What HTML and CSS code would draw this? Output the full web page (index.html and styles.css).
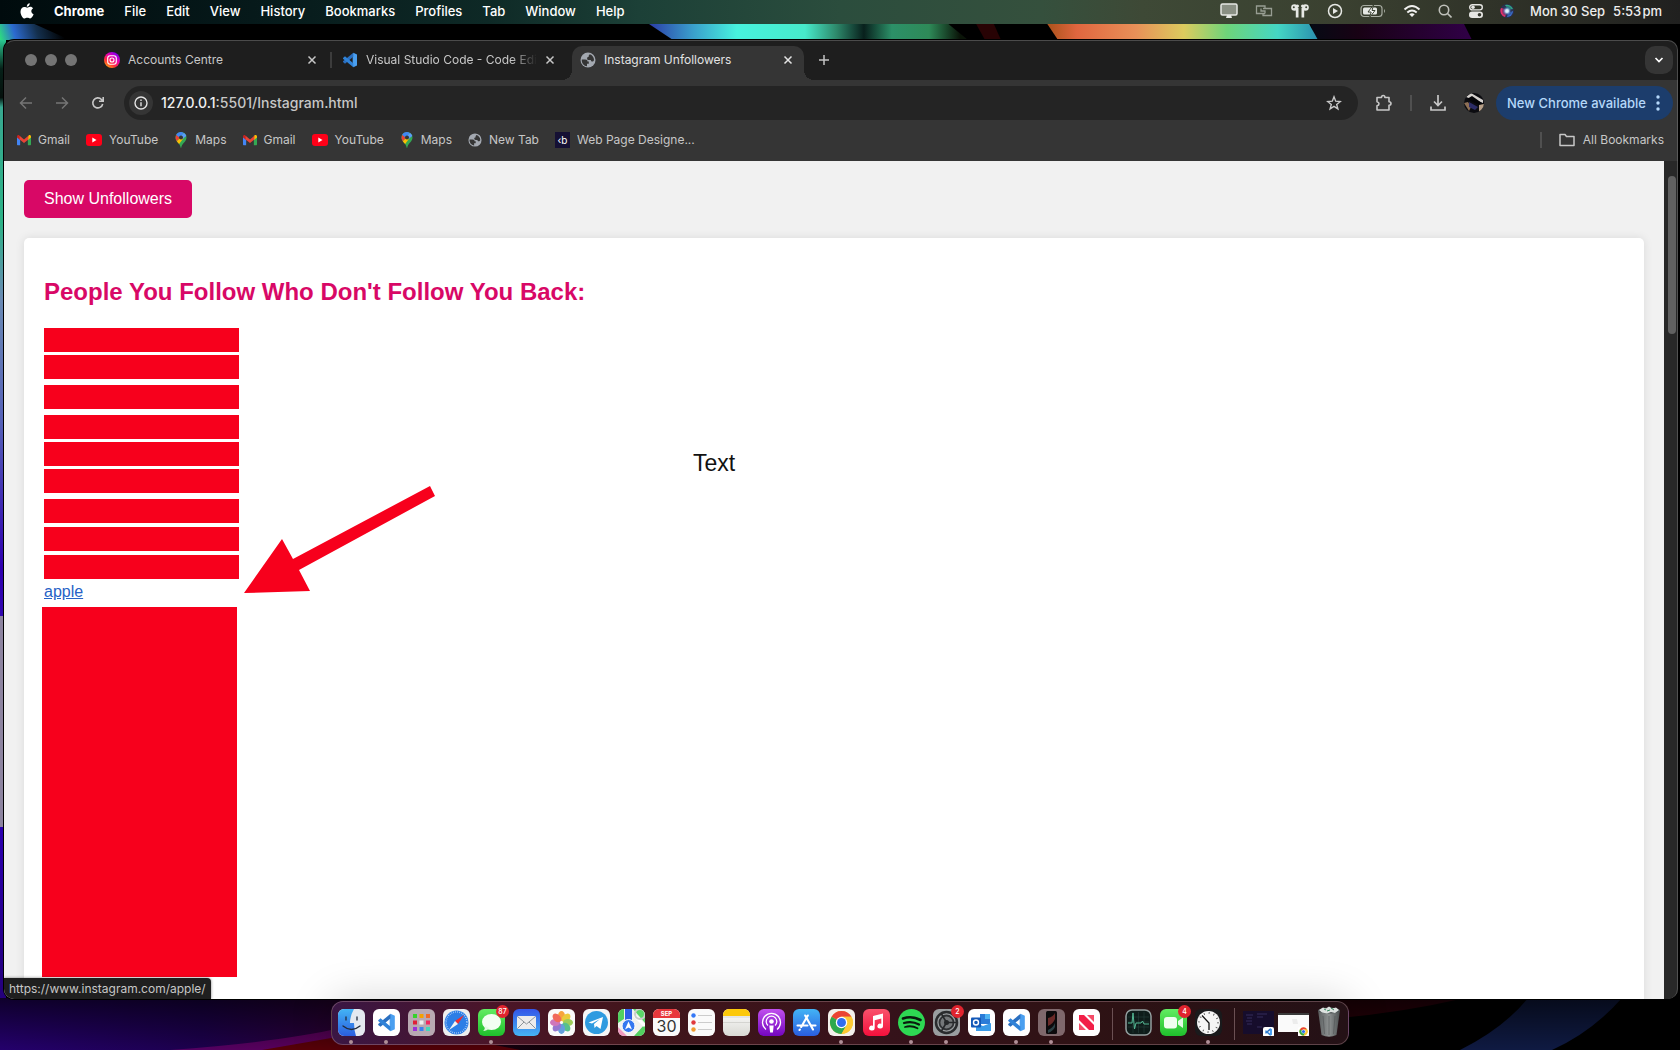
FILE: index.html
```html
<!DOCTYPE html>
<html lang="en">
<head>
<meta charset="utf-8">
<title>Instagram Unfollowers</title>
<link rel="stylesheet" href="styles.css">
</head>
<body>
<svg width="0" height="0" class="defs" aria-hidden="true">
  <defs>
    <linearGradient id="g-ig" x1="0" y1="1" x2=".7" y2="0"><stop offset="0" stop-color="#ffd600"/><stop offset=".4" stop-color="#ff2a3c"/><stop offset=".7" stop-color="#e600b0"/><stop offset="1" stop-color="#7a00f0"/></linearGradient>
    <linearGradient id="g-blue" x1="0" y1="0" x2="0" y2="1"><stop offset="0" stop-color="#43b4f5"/><stop offset="1" stop-color="#2a5de0"/></linearGradient>
    <linearGradient id="g-mail" x1="0" y1="0" x2="0" y2="1"><stop offset="0" stop-color="#3355e8"/><stop offset="1" stop-color="#46b4f4"/></linearGradient>
    <linearGradient id="g-green" x1="0" y1="0" x2="0" y2="1"><stop offset="0" stop-color="#62ec62"/><stop offset="1" stop-color="#1fc02c"/></linearGradient>
    <linearGradient id="g-pod" x1="0" y1="0" x2="0" y2="1"><stop offset="0" stop-color="#c050ee"/><stop offset="1" stop-color="#7406bf"/></linearGradient>
    <linearGradient id="g-music" x1="0" y1="0" x2="0" y2="1"><stop offset="0" stop-color="#f9526c"/><stop offset="1" stop-color="#f4103c"/></linearGradient>
    <linearGradient id="g-paper" x1="0" y1="0" x2="0" y2="1"><stop offset="0" stop-color="#fff"/><stop offset="1" stop-color="#d9d9d4"/></linearGradient>
    <linearGradient id="g-trash" x1="0" y1="0" x2="1" y2="0"><stop offset="0" stop-color="#5b5f60"/><stop offset=".5" stop-color="#8e9292"/><stop offset="1" stop-color="#4c5051"/></linearGradient>
    <radialGradient id="g-siri"><stop offset="0" stop-color="#fff"/><stop offset=".35" stop-color="#b8d8f0"/><stop offset=".7" stop-color="#3a5a9c" stop-opacity=".6"/><stop offset="1" stop-color="#20283c" stop-opacity=".3"/></radialGradient>
    <symbol id="close" viewBox="0 0 10 10"><path d="M1.500 1.500l7 7M8.500 1.500l-7 7" stroke="currentColor" stroke-width="1.500" fill="none"/></symbol>
    <symbol id="globe" viewBox="0 0 16 16"><circle cx="8" cy="8" r="7.500" fill="#a3a8b0"/><path d="M1.800 7.500h3.400c1.800 0 2.300.9 2.300 2h1.300v2.300H7v2.400C4 14 1.500 11.500 1.800 7.500zM9.800 2.200c2.500.8 4.200 3 4.200 5.800-.3 1-.9 1.500-1.800 1.500-.8 0-1.400-.6-1.400-1.500H8.700c-1 0-1.600-.7-1.600-1.600S7.700 5 8.600 5c0-1.200.1-1.900 1.200-2.800z" fill="#353535"/></symbol>
    <symbol id="gmail" viewBox="0 0 16 12"><path d="M0 2v9.200c0 .5.300.8.800.8h2.800V5z" fill="#4285f4"/><path d="M16 2v9.200c0 .5-.3.800-.8.800h-2.800V5z" fill="#34a853"/><path d="M0 2.200V3l3.600 3V2.200L2.500.6C1.500-.2 0 .5 0 2.200z" fill="#c5221f"/><path d="M16 2.200V3l-3.600 3V2.200l1.100-1.600c1-.8 2.500-.1 2.500 1.600z" fill="#fbbc04"/><path d="M3 1l5 4.300L13 1v4.500L8 9.500 3 5.500z" fill="#ea4335"/></symbol>
    <symbol id="youtube" viewBox="0 0 16 12"><rect width="16" height="12" rx="3" fill="#ff0018"/><path d="M6.300 3.500v5l4.200-2.500z" fill="#fff"/></symbol>
    <symbol id="maps" viewBox="0 0 12 16"><path d="M6 0a5.500 5.500 0 0 1 5.500 5.500C11.500 10 7 11 6.300 15.500c-.1.600-.6.600-.7 0C5 11 .5 10 .5 5.500A5.500 5.500 0 0 1 6 0z" fill="#34a853"/><path d="M6 0C3.700 0 2 1.300 1.100 3l3 2.500L8.900.9C8 .3 7 0 6 0z" fill="#4285f4"/><path d="M1.100 3C.1 5.300.5 7.500 1.800 9.300l3-3.600z" fill="#ea4335"/><path d="M1.800 9.300c.8 1.200 1.600 1.800 2.300 2.800L9 5.500 5 6z" fill="#fbbc04"/><path d="M8.900.9c1.200.7 2 1.800 2.400 3L7.500 7 6 3.800z" fill="#5a9cf8"/><circle cx="6" cy="5.500" r="2" fill="#353535"/></symbol>
    <symbol id="vscode" viewBox="0 0 24 24"><path d="M17 1l5.500 2.600v16.800L17 23l-1-3V4z" fill="#4a9ff0"/><path d="M17 1v6L4.500 17.500 1.500 15v-1z" fill="#2a6fc0"/><path d="M17 23v-6L4.500 6.500 1.500 9v1z" fill="#2f82d8"/></symbol>
    <symbol id="chrome" viewBox="0 0 24 24"><circle cx="12" cy="12" r="11" fill="#fcc934"/><path d="M12 12L2.470 6.500A11 11 0 0 1 21.530 6.500H12z" fill="#ea4335"/><path d="M12 12L2.470 6.500A11 11 0 0 0 12 23l5-8.500z" fill="#2da94f"/><path d="M12 6.500h9.530A11 11 0 0 1 12 23l5-8.500z" fill="#fcc934"/><circle cx="12" cy="12" r="5.500" fill="#fff"/><circle cx="12" cy="12" r="4.300" fill="#2f6df0"/></symbol>
  </defs>
</svg>

<svg class="wall wall-top" viewBox="0 0 1680 40" preserveAspectRatio="none" aria-hidden="true">
  <defs>
    <linearGradient id="w1" gradientUnits="userSpaceOnUse" x1="650" y1="0" x2="960" y2="0"><stop offset="0" stop-color="#2b3fa8"/><stop offset=".14" stop-color="#3aa0cc"/><stop offset=".28" stop-color="#47f2de"/><stop offset=".5" stop-color="#47eacb"/><stop offset=".6" stop-color="#2e8a6c"/><stop offset=".69" stop-color="#08201c"/><stop offset=".78" stop-color="#2c9068"/><stop offset=".9" stop-color="#2e8a58"/><stop offset="1" stop-color="#0a1408"/></linearGradient>
    <linearGradient id="w2" gradientUnits="userSpaceOnUse" x1="1050" y1="0" x2="1318" y2="0"><stop offset="0" stop-color="#b0541e"/><stop offset=".1" stop-color="#e0663f"/><stop offset=".32" stop-color="#e89058"/><stop offset=".5" stop-color="#dccb5e"/><stop offset=".66" stop-color="#6ed47a"/><stop offset=".85" stop-color="#44d6c4"/><stop offset="1" stop-color="#2a8fae"/></linearGradient>
    <linearGradient id="w3" gradientUnits="userSpaceOnUse" x1="1310" y1="0" x2="1470" y2="0"><stop offset="0" stop-color="#060a14"/><stop offset=".3" stop-color="#180214"/><stop offset="1" stop-color="#300046"/></linearGradient>
    <linearGradient id="w0" gradientUnits="userSpaceOnUse" x1="0" y1="40" x2="60" y2="22"><stop offset="0" stop-color="#2ee07c"/><stop offset=".25" stop-color="#2c6ad0"/><stop offset=".6" stop-color="#14304e"/><stop offset="1" stop-color="#000"/></linearGradient>
  </defs>
  <rect width="1680" height="40" fill="#000"/>
  <path d="M0 22h30L70 40H0z" fill="url(#w0)"/>
  <path d="M646 22h300l22 18H673z" fill="url(#w1)"/>
  <path d="M975 22h18l8 18h-16z" fill="#280304"/>
  <path d="M1310 22h153l9 18h-156z" fill="url(#w3)"/>
  <path d="M1046 22h262l10 18h-260z" fill="url(#w2)"/>
</svg>
<div class="wall wall-left"></div>
<svg class="wall wall-bottom" viewBox="0 0 1680 52" preserveAspectRatio="none" aria-hidden="true">
  <defs>
    <linearGradient id="w4"><stop offset="0" stop-color="#24006c"/><stop offset=".12" stop-color="#1c004c"/><stop offset=".2" stop-color="#2a0034"/><stop offset=".32" stop-color="#12000a"/><stop offset=".4" stop-color="#000"/></linearGradient>
    <linearGradient id="w5" x1="0" y1="0" x2="0" y2="1"><stop offset="0" stop-color="#000" stop-opacity=".6"/><stop offset="1" stop-color="#000" stop-opacity="0"/></linearGradient>
  </defs>
  <rect width="1680" height="52" fill="url(#w4)"/>
  <path d="M170 52Q280 44 340 30l40-10v32z" fill="#780070" opacity=".6"/>
  <path d="M262 52Q320 42 400 28l120 24z" fill="#560008"/>
  <path d="M1340 0h125q-60 14-125 20z" fill="#2c000a"/>
  <path d="M1528 0h94q-30 34-70 52h-92q44-22 68-52z" fill="#0f1a42"/>
  <rect width="1680" height="52" fill="url(#w5)"/>
</svg>

<header class="menubar">
  <svg class="apple" viewBox="0 0 14 17" aria-label="Apple"><path d="M9.800.3c.1 1.900-1.500 3.500-3 3.400C6.600 2 8.200.4 9.800.3zM7.200 4.700c.7 0 1.600-.9 3-.9 1.300 0 2.300.7 2.900 1.500-2.600 1.600-2.200 5 .5 6-.7 1.900-2 4.200-3.500 4.200-1.100 0-1.500-.7-2.800-.7s-1.700.7-2.700.7C2.700 15.500.5 11.800.5 8.700c0-3 1.900-4.700 3.800-4.700 1.300 0 2.200.7 2.900.7z" fill="#fff"/></svg>
  <nav class="menus">
    <strong>Chrome</strong><span>File</span><span>Edit</span><span>View</span><span>History</span><span>Bookmarks</span><span>Profiles</span><span>Tab</span><span>Window</span><span>Help</span>
  </nav>
  <div class="status">
    <svg width="18" height="16" viewBox="0 0 18 16"><rect x="1" y="1" width="16" height="11" rx="1.500" fill="#8a9084" stroke="#e6e8e4" stroke-width="1.500"/><path d="M6 15h6l-1-3H7z" fill="#e6e8e4"/></svg>
    <svg width="18" height="16" viewBox="0 0 18 16" fill="none" stroke="#979d92" stroke-width="1.300"><path d="M10 10.500H1.500V3H10v2.500M8 5.500h8.500v7H8v-2M6 5.500V8h4v2.500"/></svg>
    <svg width="20" height="16" viewBox="0 0 20 16" fill="#e6e8e4"><circle cx="4.500" cy="4.500" r="3.300"/><circle cx="15.500" cy="4.500" r="3.300"/><circle cx="7.500" cy="3" r="1.500"/><circle cx="12.500" cy="3" r="1.500"/><path d="M5.800 5h2.700v9.500H5.800zM11.500 5h2.700v9.500h-2.700z"/><circle cx="3.800" cy="4.300" r="1" fill="#3b4232"/><circle cx="16.200" cy="4.300" r="1" fill="#3b4232"/></svg>
    <svg width="16" height="16" viewBox="0 0 16 16"><circle cx="8" cy="8" r="6.500" fill="none" stroke="#e6e8e4" stroke-width="1.500"/><path d="M6 5v6l5-3z" fill="#e6e8e4"/></svg>
    <svg width="26" height="14" viewBox="0 0 26 14"><rect x="1" y="1.500" width="21" height="11" rx="3" fill="none" stroke="#a8aca2" stroke-width="1.200"/><rect x="3" y="3.500" width="14" height="7" rx="1.500" fill="#e6e8e4"/><path d="M24 5v4q2-2 0-4z" fill="#a8aca2"/><path d="M13.500 1L8 8h3.200L9.500 13.500 15 6.500h-3z" fill="#fff" stroke="#3b4232" stroke-width="1"/></svg>
    <svg width="18" height="14" viewBox="0 0 18 14" fill="none" stroke="#f0f0ee" stroke-width="2"><path d="M1.500 5.500Q9-1.500 16.500 5.500M4.300 8.500q4.700-4 9.400 0"/><path d="M6.300 10.200q2.700-2 5.400 0L9 13z" fill="#f0f0ee" stroke="none"/></svg>
    <svg width="14" height="14" viewBox="0 0 14 14" fill="none" stroke="#bfc0ba" stroke-width="1.600"><circle cx="6" cy="6" r="4.700"/><path d="M9.500 9.500l4 4"/></svg>
    <svg width="14" height="14" viewBox="0 0 14 14"><rect x=".7" y=".7" width="12.600" height="5.200" rx="2.600" fill="none" stroke="#e6e6e3" stroke-width="1.400"/><circle cx="4" cy="3.300" r="1.800" fill="#e6e6e3"/><rect y="7.500" width="14" height="6.500" rx="3.200" fill="#e6e6e3"/><circle cx="10.500" cy="10.700" r="1.800" fill="#33352c"/></svg>
    <svg width="14" height="14" viewBox="0 0 14 14"><circle cx="7" cy="7" r="7" fill="#2b3150"/><path d="M1 4a6.500 6.500 0 0 0 4 9q2-4 0-8z" fill="#e0306c"/><path d="M5 1a6.500 6.500 0 0 1 8 4L8 6z" fill="#2fa888"/><path d="M13 7a6 6 0 0 1-6 6l1-4z" fill="#3a70d0"/><circle cx="7" cy="7" r="5" fill="url(#g-siri)"/></svg>
    <time class="clock"><span>Mon 30 Sep</span><span>5:53&#8202;pm</span></time>
  </div>
</header>

<main class="window">
  <div class="tabstrip">
    <div class="lights"><i></i><i></i><i></i></div>
    <div class="tab">
      <svg width="16" height="16" viewBox="0 0 16 16"><circle cx="8" cy="8" r="8" fill="url(#g-ig)"/><rect x="3.700" y="3.700" width="8.600" height="8.600" rx="2.500" fill="none" stroke="#fff" stroke-width="1.100"/><circle cx="8" cy="8" r="2" fill="none" stroke="#fff" stroke-width="1.100"/></svg>
      <span class="tab-title">Accounts Centre</span>
      <button class="tab-close" aria-label="Close tab"><svg width="10" height="10"><use href="#close"/></svg></button>
    </div>
    <div class="tab divided">
      <svg width="16" height="16"><use href="#vscode"/></svg>
      <span class="tab-title fade">Visual Studio Code - Code Editing</span>
      <button class="tab-close" aria-label="Close tab"><svg width="10" height="10"><use href="#close"/></svg></button>
    </div>
    <div class="tab active">
      <svg width="16" height="16"><use href="#globe"/></svg>
      <span class="tab-title">Instagram Unfollowers</span>
      <button class="tab-close" aria-label="Close tab"><svg width="10" height="10"><use href="#close"/></svg></button>
    </div>
    <button class="new-tab" aria-label="New tab"><svg width="12" height="12" viewBox="0 0 12 12"><path d="M6 1v10M1 6h10" stroke="#c4c4c4" stroke-width="1.500"/></svg></button>
    <button class="tab-search" aria-label="Search tabs"><svg width="10" height="8" viewBox="0 0 10 8"><path d="M1.500 2L5 5.500 8.500 2" fill="none" stroke="#fff" stroke-width="1.700"/></svg></button>
  </div>

  <div class="toolbar">
    <button class="nav" aria-label="Back"><svg width="16" height="16" viewBox="0 0 16 16" fill="none" stroke="#757575" stroke-width="1.500"><path d="M14 8H3M8 2.500L2.500 8 8 13.500"/></svg></button>
    <button class="nav" aria-label="Forward"><svg width="16" height="16" viewBox="0 0 16 16" fill="none" stroke="#757575" stroke-width="1.500"><path d="M2 8h11M8 2.500L13.500 8 8 13.500"/></svg></button>
    <button class="nav" aria-label="Reload"><svg width="16" height="16" viewBox="0 0 16 16" fill="none" stroke="#c7c7c7" stroke-width="1.600"><path d="M12.700 9A5 5 0 1 1 11.500 4.500L13 6M13.200 2v4.300H9"/></svg></button>
    <div class="omnibox">
      <button class="info" aria-label="View site information"><svg width="14" height="14" viewBox="0 0 14 14" fill="none" stroke="#e3e3e3" stroke-width="1.400"><circle cx="7" cy="7" r="6"/><path d="M7 6.200v4M7 3.500v1.400"/></svg></button>
      <a class="url" href="#"><b>127.0.0.1</b>:5501/Instagram.html</a>
      <button class="star" aria-label="Bookmark this tab"><svg width="16" height="16" viewBox="0 0 16 16" fill="none" stroke="#c7c7c7" stroke-width="1.400"><path d="M8 1.800l1.700 4.400 4.600.3-3.600 2.900 1.200 4.500L8 11.400l-3.900 2.500 1.200-4.500L1.700 6.500l4.600-.3z"/></svg></button>
    </div>
    <button class="tool" aria-label="Extensions"><svg width="18" height="18" viewBox="0 0 18 18" fill="none" stroke="#c7c7c7" stroke-width="1.600" stroke-linejoin="round"><path d="M2 3.500h4.500q0-2 1.700-2t1.700 2H14v4.300q2 0 2 1.700t-2 1.700V16H2v-4.200q2-.3 2-2t-2-2z"/></svg></button>
    <i class="rule"></i>
    <button class="tool" aria-label="Downloads"><svg width="18" height="18" viewBox="0 0 18 18" fill="none" stroke="#c7c7c7" stroke-width="1.700"><path d="M9 1v10M5 7.500l4 4 4-4M2 12.500V16h14v-3.500"/></svg></button>
    <svg class="avatar" width="20" height="20" viewBox="0 0 20 20"><clipPath id="av"><circle cx="10" cy="10" r="10"/></clipPath><g clip-path="url(#av)"><rect width="20" height="20" fill="#0c0c10"/><path d="M2 4L7 0l12 7v3z" fill="#d4d0cc"/><path d="M3 6L8 3l10 7-1 3z" fill="#050508"/><path d="M0 10l4-1 3 5-2 4z" fill="#8d6f55"/><path d="M5 9l9 5-3 3-6-3z" fill="#2c2c66"/><path d="M15 12l5-1v5l-5 3z" fill="#b8a088"/></g></svg>
    <button class="update">New Chrome available<svg width="4" height="16" viewBox="0 0 4 16" fill="#b5d8fa"><circle cx="2" cy="2" r="1.700"/><circle cx="2" cy="8" r="1.700"/><circle cx="2" cy="14" r="1.700"/></svg></button>
  </div>

  <nav class="bookmarks">
    <a href="#"><svg width="14" height="12"><use href="#gmail"/></svg>Gmail</a>
    <a href="#"><svg width="16" height="12"><use href="#youtube"/></svg>YouTube</a>
    <a href="#"><svg width="14" height="16"><use href="#maps"/></svg>Maps</a>
    <a href="#"><svg width="14" height="12"><use href="#gmail"/></svg>Gmail</a>
    <a href="#"><svg width="16" height="12"><use href="#youtube"/></svg>YouTube</a>
    <a href="#"><svg width="14" height="16"><use href="#maps"/></svg>Maps</a>
    <a href="#"><svg width="14" height="14"><use href="#globe"/></svg>New Tab</a>
    <a href="#"><span class="cb">‹b</span>Web Page Designe...</a>
    <a class="all" href="#"><svg width="16" height="14" viewBox="0 0 16 14" fill="none" stroke="#c7c7c7" stroke-width="1.500"><path d="M1 1.500h5l1.500 2H15v9H1z" stroke-linejoin="round"/></svg>All Bookmarks</a>
  </nav>

  <div class="viewport">
    <section class="page">
      <button class="show">Show Unfollowers</button>
      <article class="card">
        <h2>People You Follow Who Don't Follow You Back:</h2>
        <ul class="people">
          <li class="bar tight"></li>
          <li class="bar loose"></li>
          <li class="bar loose"></li>
          <li class="bar tight"></li>
          <li class="bar tight"></li>
          <li class="bar loose"></li>
          <li class="bar"></li>
          <li class="bar"></li>
          <li class="bar"></li>
          <li><a href="https://www.instagram.com/apple/">apple</a></li>
          <li class="bar block"></li>
        </ul>
        <svg class="arrow" width="192" height="108" viewBox="0 0 192 108" aria-hidden="true"><path d="M-1 107L37 53l11 20L185 0l5 10L54 84l11 21z" fill="#f7001c"/></svg>
        <span class="note">Text</span>
      </article>
    </section>
    <div class="scrollbar"><i></i></div>
    <div class="link-status">https://www.instagram.com/apple/</div>
  </div>
</main>

<footer class="dock-row">
<div class="dock">
  <span class="app run"><svg viewBox="0 0 27 27"><rect width="27" height="27" rx="6" fill="#e4e9f0"/><path d="M6 0h10q-4 7-4 14h4q0 7 2 13H6a6 6 0 0 1-6-6V6a6 6 0 0 1 6-6z" fill="url(#g-blue)"/><path d="M8 8v3M19 8v3M5 17q8.500 7 17 0" fill="none" stroke="#222c3c" stroke-width="1.300" stroke-linecap="round"/></svg></span>
  <span class="app run"><svg viewBox="0 0 27 27"><rect width="27" height="27" rx="6" fill="#fff"/><use href="#vscode" x="4" y="4" width="19" height="19"/></svg></span>
  <span class="app"><svg viewBox="0 0 27 27"><rect width="27" height="27" rx="6" fill="#b8a9b2"/><g><path d="M5 5h4v4H5z" fill="#35d22c"/><path d="M11.500 5h4v4h-4z" fill="#f5a000"/><path d="M18 5h4v4h-4z" fill="#f06a28"/><path d="M5 11.500h4v4H5z" fill="#e02038"/><path d="M11.500 11.500h4v4h-4z" fill="#eee"/><path d="M18 11.500h4v4h-4z" fill="#f02860"/><path d="M5 18h4v4H5z" fill="#9a30d8"/><path d="M11.500 18h4v4h-4z" fill="#3a80f0"/><path d="M18 18h4v4h-4z" fill="#45d8b8"/></g></svg></span>
  <span class="app"><svg viewBox="0 0 27 27"><rect width="27" height="27" rx="6" fill="#eee"/><circle cx="13.500" cy="13.500" r="12" fill="#2d7ee6"/><circle cx="13.500" cy="13.500" r="10.500" fill="none" stroke="#d4e8ff" stroke-width="1.500" stroke-dasharray=".6 1.400"/><path d="M21 6l-6 9-3-3z" fill="#f02c30"/><path d="M6 21l6-9 3 3z" fill="#f4f4f4"/></svg></span>
  <span class="app run"><svg viewBox="0 0 27 27"><rect width="27" height="27" rx="6" fill="url(#g-green)"/><ellipse cx="13.500" cy="13" rx="9.500" ry="8" fill="#f2fff2"/><path d="M7 17q0 4-2 5 4 0 6-3z" fill="#e4f8e4"/></svg><b class="badge">87</b></span>
  <span class="app"><svg viewBox="0 0 27 27"><rect width="27" height="27" rx="6" fill="url(#g-mail)"/><rect x="4" y="7" width="19" height="13" rx="1.500" fill="#ececec"/><path d="M4.500 7.500l9 7.500 9-7.500M4.500 19.500l6.500-6.500M22.500 19.500L16 13" fill="none" stroke="#8d9499" stroke-width="1"/></svg></span>
  <span class="app"><svg viewBox="0 0 27 27"><rect width="27" height="27" rx="6" fill="#fafafa"/><g opacity=".85"><ellipse cx="13.500" cy="7" rx="3.500" ry="5" fill="#f7941d"/><ellipse cx="13.500" cy="7" rx="3.500" ry="5" fill="#e8c21a" transform="rotate(45 13.500 13.500)"/><ellipse cx="13.500" cy="7" rx="3.500" ry="5" fill="#8dc63f" transform="rotate(90 13.500 13.500)"/><ellipse cx="13.500" cy="7" rx="3.500" ry="5" fill="#3bb878" transform="rotate(135 13.500 13.500)"/><ellipse cx="13.500" cy="7" rx="3.500" ry="5" fill="#4a90d8" transform="rotate(180 13.500 13.500)"/><ellipse cx="13.500" cy="7" rx="3.500" ry="5" fill="#8560c8" transform="rotate(225 13.500 13.500)"/><ellipse cx="13.500" cy="7" rx="3.500" ry="5" fill="#c860b0" transform="rotate(270 13.500 13.500)"/><ellipse cx="13.500" cy="7" rx="3.500" ry="5" fill="#f05040" transform="rotate(315 13.500 13.500)"/></g></svg></span>
  <span class="app"><svg viewBox="0 0 27 27"><rect width="27" height="27" rx="6" fill="#f6f6f6"/><circle cx="13.500" cy="13.500" r="11.500" fill="#2f9be0"/><path d="M5.500 13.500L20 8l-2.500 12-4-3-2 2-.5-4 6-5-8 4.500z" fill="#fff"/></svg></span>
  <span class="app"><svg viewBox="0 0 27 27"><clipPath id="mp"><rect width="27" height="27" rx="6"/></clipPath><g clip-path="url(#mp)"><rect width="27" height="27" fill="#f2f2ee"/><path d="M0 0h6v10L0 14zM16 27l11-12v12z" fill="#52d060"/><path d="M15 0h12v14z" fill="#5bd668"/><path d="M7 0h7v12H7z" fill="#2c5fe8"/><path d="M16 6l11 11" stroke="#fff" stroke-width="3"/><path d="M0 18l9 9H0z" fill="#f09ac0"/><circle cx="22" cy="5" r="5" fill="none" stroke="#ccc" stroke-width="2"/></g><circle cx="10.500" cy="17" r="6.500" fill="#3478f0" stroke="#fff" stroke-width="1"/><path d="M10.500 12.500l3.500 8-3.500-2-3.500 2z" fill="#fff"/></svg></span>
  <span class="app cal"><em>SEP</em><b>30</b></span>
  <span class="app"><svg viewBox="0 0 27 27"><rect width="27" height="27" rx="6" fill="#fafafa"/><path d="M10 6.500h14M10 13.500h14M10 20.500h14" stroke="#ccc" stroke-width="1"/><circle cx="5.500" cy="6.500" r="2.200" fill="#3478f6"/><circle cx="5.500" cy="13.500" r="2.200" fill="#e0383c"/><circle cx="5.500" cy="20.500" r="2.200" fill="#f09a30"/></svg></span>
  <span class="app"><svg viewBox="0 0 27 27"><rect width="27" height="27" rx="6" fill="url(#g-paper)"/><path d="M0 7V6a6 6 0 0 1 6-6h15a6 6 0 0 1 6 6v1z" fill="#fcc80a"/><path d="M0 8h27M0 13.500h27" stroke="#c4c4c0" stroke-width=".6"/></svg></span>
  <span class="app"><svg viewBox="0 0 27 27"><rect width="27" height="27" rx="6" fill="url(#g-pod)"/><g fill="none" stroke="#fff" stroke-width="1.300"><path d="M8 20.500a9 9 0 1 1 11 0M10 16.500a5.300 5.300 0 1 1 7 0"/></g><circle cx="13.500" cy="12.500" r="2.300" fill="#fff"/><path d="M11.300 16.500h4.400l-.8 7h-2.800z" fill="#fff"/></svg></span>
  <span class="app"><svg viewBox="0 0 27 27"><rect width="27" height="27" rx="6" fill="url(#g-blue)"/><g fill="none" stroke="#fff" stroke-width="2.100" stroke-linecap="round"><path d="M14.800 6.500L8.200 18M12.200 6.500L20 20.500M4.500 16.500h10M18.500 16.500h4M6.800 20.500l-.3.500"/></g></svg></span>
  <span class="app run"><svg viewBox="0 0 27 27"><rect width="27" height="27" rx="6" fill="#f3f0ec"/><use href="#chrome" x="1" y="1" width="25" height="25"/></svg></span>
  <span class="app"><svg viewBox="0 0 27 27"><rect width="27" height="27" rx="6" fill="url(#g-music)"/><path d="M10 7l10-2.500V17a2.800 2.500 0 1 1-1.700-2.200V9.500l-6.600 1.700V19A2.800 2.500 0 1 1 10 16.800z" fill="#fff"/></svg></span>
  <span class="app run"><svg viewBox="0 0 27 27"><circle cx="13.500" cy="13.500" r="13.500" fill="#2ed853"/><g fill="none" stroke="#0a1a0e" stroke-linecap="round"><path d="M5 9.500q9-3 17.500 1.500" stroke-width="2.600"/><path d="M6 14q8-2.500 15 1.500" stroke-width="2.200"/><path d="M7 18q6.500-2 12.500 1.300" stroke-width="1.800"/></g></svg></span>
  <span class="app run"><svg viewBox="0 0 27 27"><rect width="27" height="27" rx="6" fill="#9a9ea0"/><circle cx="13.500" cy="13.500" r="10.500" fill="none" stroke="#2a2c2e" stroke-width="2.500"/><circle cx="13.500" cy="13.500" r="7" fill="#75787a" stroke="#303234" stroke-width="1.800"/><path d="M13.500 13.500H23M13.500 13.500L8.500 5M13.500 13.500L8.500 22" stroke="#26282a" stroke-width="1.600"/><circle cx="13.500" cy="13.500" r="2.500" fill="#26282a"/></svg><b class="badge">2</b></span>
  <span class="app"><svg viewBox="0 0 27 27"><rect width="27" height="27" rx="6" fill="#fff"/><path d="M12 5h10v10H12z" fill="#2b7cd8"/><path d="M17 5h5v5h-5z" fill="#4fb4f2"/><path d="M8 14l7 3 8-3v8H8z" fill="#3a9be8"/><rect x="3" y="8.500" width="10" height="10" rx="1" fill="#1459b8"/><circle cx="8" cy="13.500" r="2.500" fill="none" stroke="#fff" stroke-width="1.400"/></svg></span>
  <span class="app run"><svg viewBox="0 0 27 27"><rect width="27" height="27" rx="6" fill="#fff"/><use href="#vscode" x="4" y="4" width="19" height="19"/></svg></span>
  <span class="app run"><svg viewBox="0 0 27 27"><rect width="27" height="27" rx="6" fill="#7f686c"/><rect x="8" y="2" width="11" height="23" rx="1.500" fill="#0c0a0c"/><path d="M10 9q5-1 7-5v6q-2 5-7 7z" fill="#6a2a28"/><path d="M10 21q5-2 7-7v4q-2 4-7 6z" fill="#2b4044"/></svg></span>
  <span class="app"><svg viewBox="0 0 27 27"><rect width="27" height="27" rx="6" fill="#fff"/><path d="M6 6h5l10 10v5h-5L6 11z" fill="#f21f48"/><path d="M14 6h7v7zM6 14v7h7z" fill="#f54c68"/></svg></span>
  <i class="dock-rule"></i>
  <span class="app"><svg viewBox="0 0 27 27"><rect x="1" y="1" width="25" height="25" rx="6" fill="#0e1c1a" stroke="#94a0a0" stroke-width="1.500"/><path d="M3 8h21M3 13h21M3 18h21M8 3v21M13.500 3v21M19 3v21" stroke="#294540" stroke-width=".5"/><path d="M3 14h4l1-10 1.500 16L11 14h5l1.500-2 1.500 3h5" fill="none" stroke="#54b894" stroke-width="1"/></svg></span>
  <span class="app"><svg viewBox="0 0 27 27"><rect width="27" height="27" rx="6" fill="url(#g-green)"/><rect x="4" y="8" width="13" height="11.500" rx="3" fill="#effff0"/><path d="M18 12l5-3.500v10.500l-5-3.500z" fill="#e6fbe7"/></svg><b class="badge">4</b></span>
  <span class="app run"><svg viewBox="0 0 27 27"><rect width="27" height="27" rx="6" fill="#1a1a1c"/><circle cx="13.500" cy="13.500" r="11.500" fill="#f5f5f5"/><circle cx="13.500" cy="13.500" r="9.500" fill="none" stroke="#444" stroke-width="2" stroke-dasharray=".8 4.170"/><path d="M14 21v-7L7 6.500" fill="none" stroke="#111" stroke-width="1.300"/></svg></span>
  <i class="dock-rule"></i>
  <span class="thumb"><svg viewBox="0 0 31 27"><rect y="2" width="31" height="23" fill="#160d2c"/><path d="M3 6h7M4 9h5M3 12h6M4 15h5M14 5h10M14 8h6M14 18h5" stroke="#3c3568" stroke-width=".8"/><rect x="20" y="18" width="11" height="10" rx="2" fill="#fff"/><use href="#vscode" x="21.500" y="19" width="8" height="8"/></svg></span>
  <span class="thumb"><svg viewBox="0 0 31 27"><rect y="4" width="31" height="19" fill="#fafafa"/><path d="M0 4h31v2H0z" fill="#3a3a3a"/><path d="M14 10h5l1 5h-5z" fill="#ececec"/><rect x="20" y="18" width="11" height="10" rx="2" fill="#fff"/><use href="#chrome" x="21" y="18" width="9" height="9"/></svg></span>
  <span class="trash"><svg viewBox="0 0 24 32"><path d="M1 4h22l-3.500 25q-7.500 3.500-15 0z" fill="url(#g-trash)"/><path d="M6 10l1.500 18M12 10v19M18 10l-1.500 18" stroke="#505456" stroke-width=".6"/><ellipse cx="12" cy="4.500" rx="11" ry="3" fill="#4c5052"/><path d="M2 4l4-2.500 3 1 3-2 3 2 4-1 3 2.500-4 3-4-1-4 1.500-5-1z" fill="#dde2e0"/><path d="M7 3l2 1M14 2l3 2M10 5l3-1" stroke="#368a60" stroke-width="1"/></svg></span>
</div>
</footer>
</body>
</html>
```
FILE: styles.css
```css
* { box-sizing: border-box; }

body {
  margin: 0;
  height: 100vh;
  position: relative;
  display: flex;
  flex-direction: column;
  overflow: hidden;
  background: #000;
  font: 400 12px/16px Inter, "Liberation Sans", sans-serif;
  color: #c7c7c7;
}

button {
  border: 0;
  padding: 0;
  background: none;
  color: inherit;
  font: inherit;
  display: flex;
  align-items: center;
  justify-content: center;
  flex: none;
}

a { color: inherit; text-decoration: none; }
svg { display: block; flex: none; }
.defs { position: absolute; }

/* Wallpaper showing around the window */
.wall { position: absolute; left: 0; }
.wall-top { top: 0; width: 100%; height: 40px; }
.wall-left {
  top: 40px;
  bottom: 50px;
  width: 6px;
  background: linear-gradient(#2ac890 0, #062018 3%, #04100c 6%, #38a890 7%, #2db287 19%, #6a8ab4 27%, #5560b8 40%, #2f00b0 55%, #3208b0 60%, #8d84a0 60%, #8d84a0 82%, #2c00b0 82%, #24007a 100%);
}
.wall-bottom { bottom: 0; width: 100%; height: 52px; }

/* System menu bar */
.menubar {
  position: relative;
  height: 24px;
  padding: 0 18px 2px 20px;
  display: flex;
  align-items: center;
  background: linear-gradient(90deg, #000b0d, #06191a 15%, #0e2926 29%, #1c4037 38%, #2b4d3d 50%, #35503d 62%, #3e4936 68%, #3a4030 80%, #2c2e26 92%, #20201f);
  color: #fff;
  font-size: 13px;
  font-weight: 500;
}
.apple { width: 14px; height: 17px; }
.menus { display: flex; gap: 20px; margin-left: 20px; }
.menus strong { font-weight: 700; }
.status { display: flex; align-items: center; gap: 17px; margin-left: auto; }
.clock { display: flex; gap: 8px; margin-left: -1px; color: #eee; }

/* Browser window */
.window {
  position: relative;
  flex: 1;
  min-height: 0;
  margin: 16px 2px 0 4px;
  display: flex;
  flex-direction: column;
  border-radius: 10px;
  overflow: hidden;
  background: #353535;
  box-shadow: 0 0 0 1px #000;
}
.window::after {
  content: "";
  position: absolute;
  inset: 0;
  border: 1px solid rgba(160, 160, 160, .35);
  border-bottom: 0;
  border-left-color: transparent;
  border-radius: 10px;
  pointer-events: none;
}

.tabstrip {
  height: 40px;
  padding: 6px 5px 0 21px;
  display: flex;
  background: #1e1e1e;
}
.lights { display: flex; gap: 8px; width: 71px; padding-top: 8px; }
.lights i { width: 12px; height: 12px; border-radius: 50%; background: #747474; }
.tab {
  position: relative;
  width: 232px;
  height: 34px;
  margin-right: 6px;
  padding: 0 11px 6px 8px;
  display: flex;
  align-items: center;
  gap: 8px;
}
.tab-title { flex: 1; white-space: nowrap; overflow: hidden; }
.tab-title.fade {
  mask-image: linear-gradient(90deg, #000 85%, transparent);
}
.tab.active { background: #353535; border-radius: 10px 10px 0 0; color: #e3e3e3; }
.tab.active::before,
.tab.active::after {
  content: "";
  position: absolute;
  bottom: 0;
  width: 10px;
  height: 10px;
}
.tab.active::before { left: -10px; background: radial-gradient(circle at 0 0, transparent 10px, #353535 10px); }
.tab.active::after { right: -10px; background: radial-gradient(circle at 100% 0, transparent 10px, #353535 10px); }
.tab.divided::before {
  content: "";
  position: absolute;
  left: -4px;
  top: 6px;
  width: 2px;
  height: 16px;
  background: #3c3c3c;
}
.new-tab { width: 28px; height: 28px; }
.tab-search { width: 28px; height: 28px; margin-left: auto; border-radius: 10px; background: #353535; }

.toolbar {
  height: 46px;
  padding: 0 5px 0 4px;
  display: flex;
  align-items: center;
}
.nav { width: 36px; height: 34px; }
.omnibox {
  flex: 1;
  height: 34px;
  margin-left: 8px;
  padding: 0 16px 0 5px;
  display: flex;
  align-items: center;
  border-radius: 17px;
  background: #242424;
}
.info { width: 24px; height: 24px; border-radius: 50%; background: #353535; }
.url { flex: 1; margin-left: 8px; font-size: 14px; font-weight: 500; color: #c7c7c7; }
.url b { font-weight: 500; color: #f0f0f0; }
.tool { width: 36px; height: 34px; }
.omnibox + .tool { margin-left: 8px; }
.rule { width: 2px; height: 16px; margin: 0 8px; background: #505050; }
.avatar { margin: 0 12px 0 8px; }
.update {
  height: 34px;
  padding: 0 13px 0 11px;
  gap: 10px;
  border-radius: 17px;
  background: #1c3d6c;
  color: #b5d8fa;
  font-size: 13px;
  font-weight: 500;
}

.bookmarks {
  height: 35px;
  padding: 0 14px 8px 13px;
  display: flex;
  align-items: center;
  gap: 16px;
}
.bookmarks a { display: flex; align-items: center; gap: 7px; }
.bookmarks .all { margin-left: auto; padding-left: 17px; gap: 8px; border-left: 2px solid #505050; }
.cb { width: 15px; background: #151034; color: #fff; font-size: 10px; text-align: center; }

/* Web page */
.viewport { position: relative; flex: 1; min-height: 0; display: flex; }
.page {
  flex: 1;
  min-width: 0;
  padding: 19px 20px 0;
  display: flex;
  flex-direction: column;
  overflow: hidden;
  background: #f1f1f1;
  font: 400 16px/18px "Liberation Sans", Arial, sans-serif;
}
.show {
  align-self: flex-start;
  padding: 10px 20px;
  border-radius: 5px;
  background: #d80866;
  color: #fff;
}
.card {
  position: relative;
  flex: 1 0 auto;
  margin-top: 20px;
  padding: 40px 20px;
  border-radius: 5px 5px 0 0;
  background: #fff;
  box-shadow: 0 0 10px rgba(0, 0, 0, .1);
}
.card h2 { margin: 0; font-size: 24px; line-height: 27px; color: #d80866; }
.people { margin: 23px 0 0; padding: 0; list-style: none; }
.people a { display: block; margin-bottom: 6px; color: #2762c6; text-decoration: underline; }
.bar { width: 195px; height: 24px; margin-bottom: 4px; background: #f7001c; }
.tight { margin-bottom: 3px; }
.loose { margin-bottom: 6px; }
.block { height: 370px; margin: 0 0 0 -2px; }
.arrow { position: absolute; left: 221px; top: 248px; overflow: visible; }
.note { position: absolute; left: 669px; top: 212px; font-size: 23px; line-height: 26px; color: #111; }

.scrollbar { width: 14px; padding: 15px 2px 0 4px; background: #282828; }
.scrollbar i { display: block; height: 158px; border-radius: 4px; background: #616161; }
.link-status {
  position: absolute;
  left: 0;
  bottom: 0;
  padding: 3px 5px 2px;
  border-radius: 0 4px 0 0;
  background: #1f1f1f;
  box-shadow: 0 0 3px rgba(0, 0, 0, .5);
}

/* Dock */
.dock-row { position: relative; display: flex; justify-content: center; padding: 2px 0 5px; }
.dock {
  height: 44px;
  padding: 7px 7px 0 6px;
  display: flex;
  gap: 8px;
  border: 1px solid rgba(200, 160, 170, .35);
  border-radius: 12px;
  background: linear-gradient(90deg, #3a1644, #4b1528 16%, #42151b 30%, #35121a 55%, #2e1214 75%, #241116);
  box-shadow: 0 0 44px rgba(0, 0, 0, .18);
}
.app { position: relative; width: 27px; height: 27px; }
.app.run::after {
  content: "";
  position: absolute;
  left: 11px;
  top: 31px;
  width: 4px;
  height: 4px;
  border-radius: 50%;
  background: #b09098;
}
.badge {
  position: absolute;
  right: -4px;
  top: -4px;
  width: 13px;
  height: 13px;
  border-radius: 50%;
  background: #e0242e;
  color: #fff;
  font-size: 7px;
  line-height: 13px;
  font-weight: 500;
  text-align: center;
}
.cal {
  border-radius: 6px;
  overflow: hidden;
  background: #fafafa;
  display: flex;
  flex-direction: column;
  text-align: center;
}
.cal em { background: #e8383c; color: #fff; font: 700 6px/9px Inter, sans-serif; }
.cal b { color: #333; font: 400 16px/17px Inter, sans-serif; }
.dock-rule { width: 1px; height: 32px; margin: -1px 4px 0; background: #6b5053; }
.thumb { width: 31px; height: 27px; margin-left: -4px; }
.trash { width: 24px; height: 32px; margin-top: -3px; }
.trash svg { width: 24px; height: 32px; }
```
